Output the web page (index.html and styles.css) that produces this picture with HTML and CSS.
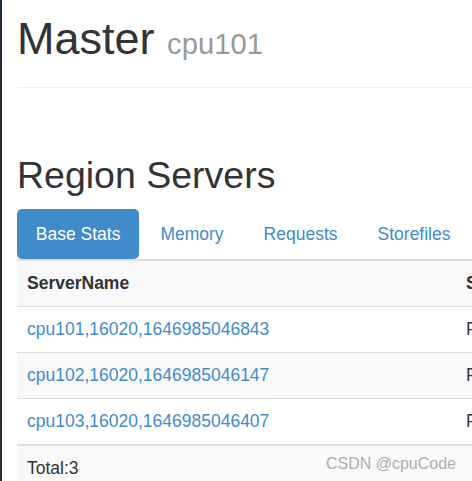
FILE: index.html
```html
<!DOCTYPE html>
<html lang="en">
<head>
    <meta charset="UTF-8">
    <meta name="viewport" content="width=device-width, initial-scale=1.0">
    <title>HBase Master: cpu101</title>
    <link rel="stylesheet" href="styles.css">
</head>
<body>
    <div class="container">
        <div class="page-header">
            <h1>Master <small>cpu101</small></h1>
        </div>

        <section>
            <h2>Region Servers</h2>
            <ul class="nav-pills">
                <li class="active"><a href="#tab_baseStats">Base Stats</a></li>
                <li><a href="#tab_memoryStats">Memory</a></li>
                <li><a href="#tab_requestStats">Requests</a></li>
                <li><a href="#tab_storeStats">Storefiles</a></li>
                <li><a href="#tab_compactStats">Compactions</a></li>
            </ul>
            <div class="tab-content">
                <table class="table table-striped">
                    <tbody>
                        <tr>
                            <th class="col-name">ServerName</th>
                            <th>Start time</th>
                            <th>Version</th>
                            <th>Requests Per Second</th>
                            <th>Num. Regions</th>
                        </tr>
                        <tr>
                            <td><a href="#">cpu101,16020,1646985046843</a></td>
                            <td>Fri Mar 11 15:50:46 CST 2022</td>
                            <td>2.1.0</td>
                            <td>0</td>
                            <td>2</td>
                        </tr>
                        <tr>
                            <td><a href="#">cpu102,16020,1646985046147</a></td>
                            <td>Fri Mar 11 15:50:46 CST 2022</td>
                            <td>2.1.0</td>
                            <td>0</td>
                            <td>1</td>
                        </tr>
                        <tr>
                            <td><a href="#">cpu103,16020,1646985046407</a></td>
                            <td>Fri Mar 11 15:50:46 CST 2022</td>
                            <td>2.1.0</td>
                            <td>0</td>
                            <td>1</td>
                        </tr>
                    </tbody>
                    <tbody>
                        <tr>
                            <td>Total:3</td>
                            <td></td>
                            <td></td>
                            <td>0</td>
                            <td>4</td>
                        </tr>
                    </tbody>
                </table>
            </div>
        </section>
    </div>

    <div class="watermark">CSDN @cpuCode</div>
</body>
</html>
```

FILE: styles.css
```css
/* Base */
* {
    box-sizing: border-box;
}

html, body {
    margin: 0;
    padding: 0;
    overflow: hidden;
}

body {
    font-family: "Liberation Sans", Arial, sans-serif;
    font-size: 17.5px;
    line-height: 25px;
    color: #333;
    background: #fff;
    border-left: 2px solid #1e2c39;
    border-image: linear-gradient(to bottom, #1d2b38, #2a2b30 60%, #3a2b24) 1;
    min-height: 481px;
    position: relative;
}

a {
    color: #428bca;
    text-decoration: none;
}

.container {
    width: 1200px;
    padding: 0 0 0 15px;
}

/* Page header */
.page-header {
    padding-bottom: 24px;
    border-bottom: 1px solid #eee;
}

h1 {
    margin: 14px 0 0;
    font-size: 45px;
    font-weight: 500;
    line-height: 49px;
}

h1 small {
    font-size: 65%;
    line-height: 1;
    color: #999;
    font-weight: normal;
}

h2 {
    margin: 67px 0 13px;
    font-size: 37.5px;
    font-weight: 500;
    line-height: 41px;
}

/* Tabs */
.nav-pills {
    list-style: none;
    margin: 0;
    padding: 0;
    display: flex;
    gap: 2.5px;
}

.nav-pills a {
    display: block;
    padding: 12.5px 18.75px;
    border-radius: 5px;
}

.nav-pills .active a {
    background: #428bca;
    color: #fff;
}

/* Table */
.table {
    width: 100%;
    border-collapse: collapse;
    border-spacing: 0;
}

.table th,
.table td {
    padding: 10px;
    text-align: left;
    vertical-align: top;
    border-top: 1px solid #ddd;
    white-space: nowrap;
}

.table th {
    font-weight: bold;
}

.table tbody:first-child tr:first-child th {
    border-top: 2px solid #ddd;
}

.table tbody + tbody {
    border-top: 2px solid #ddd;
}

.col-name {
    width: 439px;
}

.table-striped tbody tr:nth-child(odd) {
    background: #f9f9f9;
}

/* Watermark */
.watermark {
    position: absolute;
    right: 16px;
    top: 456px;
    font-size: 16px;
    line-height: 15px;
    color: #adadad;
}
```
